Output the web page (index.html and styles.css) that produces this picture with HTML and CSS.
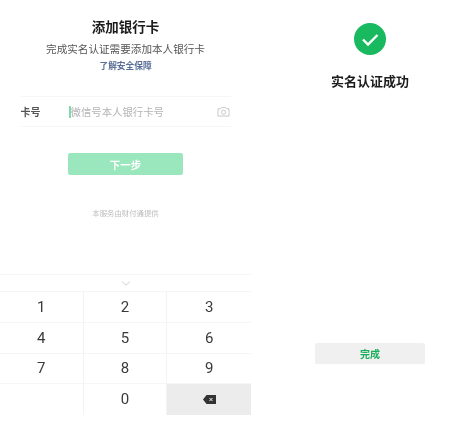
FILE: index.html
```html
<!DOCTYPE html>
<html lang="zh-CN">
<head>
  <meta charset="UTF-8" />
  <title>添加银行卡</title>
  <link rel="stylesheet" href="styles.css">
</head>
<body>
  <!-- 左: 添加银行卡 -->
  <section class="add-card">
    <h1 class="title">添加银行卡</h1>
    <p class="subtitle">完成实名认证需要添加本人银行卡</p>
    <a class="link">了解安全保障</a>

    <div class="card-row">
      <span class="card-label">卡号</span>
      <span class="caret"></span>
      <span class="placeholder">微信号本人银行卡号</span>
      <svg class="camera" width="13" height="11" viewBox="0 0 14 12" fill="none" stroke="#c4c4c4" stroke-width="1">
        <path d="M1 3h3l1-1.5h4L10 3h3v8H1z" />
        <circle cx="7" cy="6.8" r="2.3" />
      </svg>
    </div>

    <button class="next-btn">下一步</button>
    <p class="provider">本服务由财付通提供</p>

    <div class="keyboard">
      <div class="keyboard-top">
        <svg width="10" height="5" viewBox="0 0 10 5" fill="none" stroke="#d2d2d2" stroke-width="1">
          <path d="M1 .7l4 3.4 4-3.4" />
        </svg>
      </div>
      <div class="keys">
        <div class="key">1</div>
        <div class="key">2</div>
        <div class="key">3</div>
        <div class="key">4</div>
        <div class="key">5</div>
        <div class="key">6</div>
        <div class="key">7</div>
        <div class="key">8</div>
        <div class="key">9</div>
        <div class="key"></div>
        <div class="key">0</div>
        <div class="key key-del">
          <svg width="13" height="9" viewBox="0 0 13 9">
            <path d="M3.500 0H13v9H3.500L0 4.500z" fill="#333" />
            <path d="M6.500 3l3 3M9.500 3l-3 3" stroke="#eee" stroke-width="1" />
          </svg>
        </div>
      </div>
    </div>
  </section>

  <!-- 右: 认证成功 -->
  <section class="success">
    <svg class="check" width="32" height="32" viewBox="0 0 32 32">
      <circle cx="16" cy="16" r="16" fill="#19b95f" />
      <path d="M9 16.500l5 5 9.500-9.500" fill="none" stroke="#fff" stroke-width="2.400" />
    </svg>
    <h2 class="success-title">实名认证成功</h2>
    <button class="done-btn">完成</button>
  </section>
</body>
</html>
```

FILE: styles.css
```css
* {
  box-sizing: border-box;
}

body {
  margin: 0;
  width: 455px;
  height: 426px;
  display: flex;
  background: white;
  font-family: "Liberation Sans", "Noto Sans CJK SC", sans-serif;
  overflow: hidden;
  /* the source picture is a soft, scaled-down phone capture */
  filter: blur(0.35px);
}

.add-card {
  width: 251px;
  display: flex;
  flex-direction: column;
  align-items: center;
  padding-top: 19px;
}

.title {
  margin: 0;
  font-size: 13.5px;
  line-height: 17px;
  color: #1c1c1c;
}

.subtitle {
  margin: 7px 0 0;
  font-size: 10.6px;
  line-height: 13px;
  color: #555;
}

.link {
  margin-top: 4px;
  font-size: 8.7px;
  line-height: 12px;
  font-weight: bold;
  color: #5a6f97;
}

.card-row {
  width: 210px;
  height: 31px;
  margin-top: 24px;
  display: flex;
  align-items: center;
  border-top: 1px solid #f6f6f6;
  border-bottom: 1px solid #f6f6f6;
}

.card-label {
  width: 48px;
  font-size: 10px;
  font-weight: bold;
  color: #555;
}

.caret {
  width: 2px;
  height: 12px;
  background: #7fdcaa;
}

.placeholder {
  flex: 1;
  font-size: 10.4px;
  color: #b4b4b4;
}

.camera {
  margin-right: 1px;
}

.next-btn {
  width: 115px;
  height: 22px;
  margin-top: 26px;
  border: none;
  border-radius: 2px;
  padding: 0;
  background: #9ae6bd;
  color: white;
  font-family: inherit;
  font-size: 10.500px;
  font-weight: bold;
}

.provider {
  margin: 33px 0 0;
  font-size: 7.400px;
  line-height: 11px;
  color: #bcbcbc;
}

.keyboard {
  width: 100%;
  margin-top: 55px;
  border-top: 1px solid #f6f6f6;
}

.keyboard-top {
  height: 16px;
  display: flex;
  align-items: center;
  justify-content: center;
}

.keys {
  display: grid;
  grid-template-columns: repeat(3, 1fr);
  grid-auto-rows: 30.8px;
  border-top: 1px solid #f5f5f5;
}

.key {
  display: flex;
  align-items: center;
  justify-content: center;
  font-size: 15px;
  color: #3a3a3a;
  font-family: "Roboto", sans-serif;
  border-bottom: 1px solid #f5f5f5;
  border-right: 1px solid #f3f3f3;
}

.key:nth-child(3n) {
  border-right: none;
}

.key:nth-child(n+10) {
  border-bottom: none;
  padding-bottom: 1px;
}

.key-del {
  background: #ececec;
}

.success {
  flex: 1;
  display: flex;
  flex-direction: column;
  align-items: center;
  padding-top: 23px;
  padding-left: 34px;
}

.success-title {
  margin: 18px 0 0;
  font-size: 13px;
  line-height: 18px;
  color: #1c1c1c;
}

.done-btn {
  width: 110px;
  height: 21px;
  margin-top: 252px;
  border: none;
  border-radius: 2px;
  padding: 0;
  background: #f0f0f0;
  color: #1aad5b;
  font-family: inherit;
  font-size: 10px;
  font-weight: bold;
}
```
